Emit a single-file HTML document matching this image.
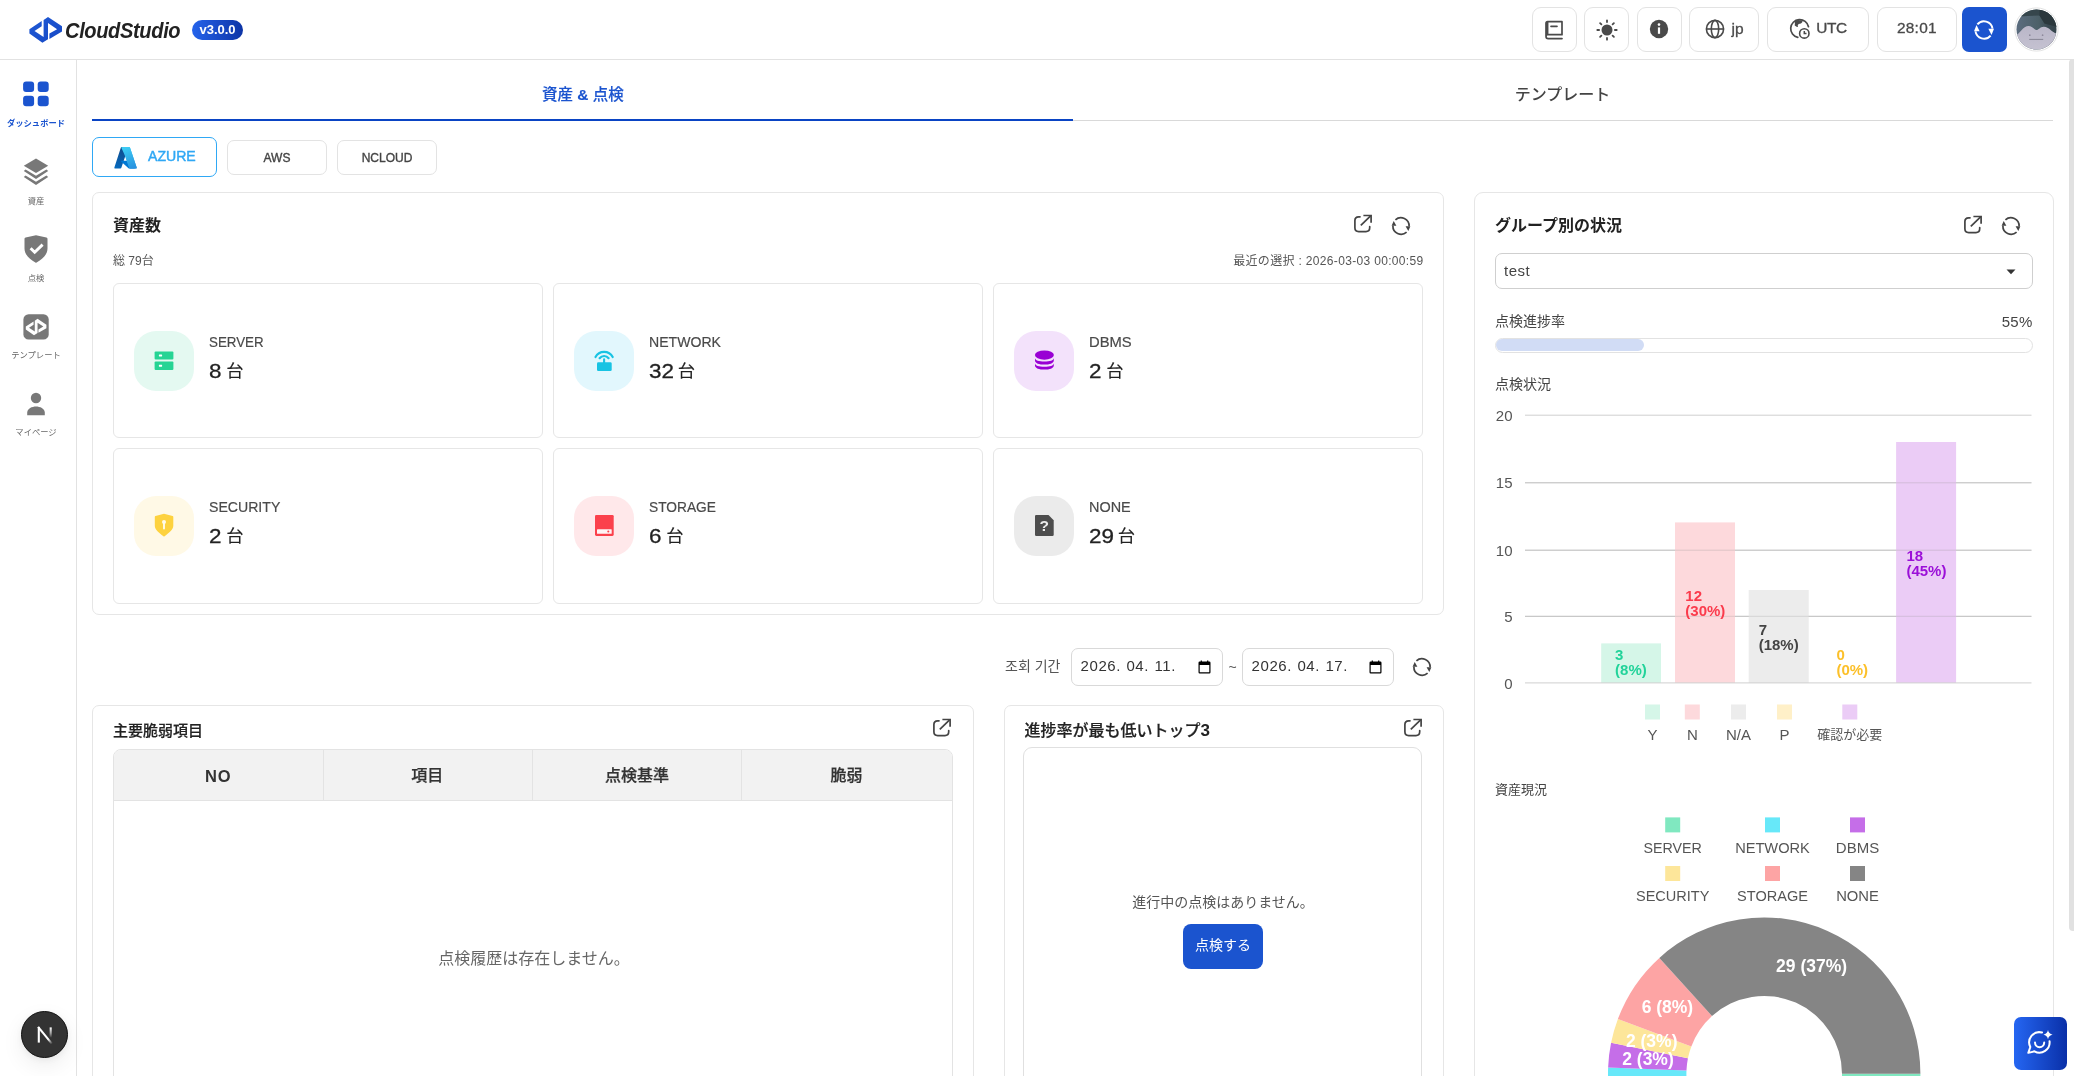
<!DOCTYPE html>
<html lang="ja">
<head>
<meta charset="utf-8">
<title>CloudStudio</title>
<style>
*{box-sizing:border-box;margin:0;padding:0}
html,body{width:2074px;height:1076px;overflow:hidden;background:#fff}
body{position:relative;will-change:transform;font-family:"Liberation Sans","Noto Sans CJK JP",sans-serif;color:#444;-webkit-font-smoothing:antialiased}
.abs{position:absolute}
.t{position:absolute;white-space:nowrap;line-height:1}
.c{transform:translateX(-50%)}
.r{transform:translateX(-100%)}
svg{position:absolute;overflow:visible}
/* header */
#hdr{left:0;top:0;width:2074px;height:60px;border-bottom:1px solid #e2e2e2;background:#fff}
.hb{position:absolute;top:7px;height:45px;border:1px solid #e3e3e3;border-radius:9px;background:#fff}
/* sidebar */
#side{left:0;top:60px;width:77px;height:1016px;border-right:1px solid #e2e2e2;background:#fff}
.sl{position:absolute;white-space:nowrap;line-height:1;font-size:9px;color:#666;left:36px;transform:translateX(-50%)}
/* cards */
.card{position:absolute;border:1px solid #e6e6e6;border-radius:7px;background:#fff}
.ic{position:absolute;width:60px;height:60px;border-radius:22px}
.lab{position:absolute;white-space:nowrap;line-height:1;font-size:15.5px;color:#4a4a4a;-webkit-text-stroke:0.2px #4a4a4a}
.val{position:absolute;white-space:nowrap;line-height:1;font-size:20.4px;color:#222;-webkit-text-stroke:0.3px #222}
.val b{display:inline-block;font-weight:400;transform:scaleX(1.1);transform-origin:0 50%}
.val span{font-size:17.3px;-webkit-text-stroke:0.1px #222;position:relative;top:-1px}
</style>
</head>
<body>
<!-- HEADER -->
<div id="hdr" class="abs">
 <svg style="left:0;top:0" width="70" height="60" viewBox="0 0 70 60"><defs><linearGradient id="lg" x1="0" y1="0" x2="1" y2="1"><stop offset="0" stop-color="#1f5ad6"/><stop offset="1" stop-color="#1648c4"/></linearGradient></defs>
  <polygon fill="url(#lg)" points="29.4,29.2 41.7,21 41.7,26.3 34.5,30.9 43.6,36.9 43.6,20 48,16.9 62,26.3 62,31.6 49.4,38.9 49.4,33.6 57.1,29.2 48,22.9 48,39.3 42.4,42.7 29.4,33.6"/></svg>
 <div class="t" id="brand" style="left:65px;top:21px;font-size:21.5px;font-weight:700;font-style:italic;color:#222;letter-spacing:-0.4px;transform:scaleX(0.934);transform-origin:0 0">CloudStudio</div>
 <div class="abs" style="left:192px;top:20px;width:51px;height:20px;border-radius:10px;background:linear-gradient(90deg,#2563eb,#0d34a6)"></div>
 <div class="t c" style="left:217.5px;top:22.6px;font-size:13px;font-weight:700;color:#fff">v3.0.0</div>

 <div class="hb" style="left:1532px;width:45px"></div>
 <svg style="left:1543px;top:19px" width="22" height="22" viewBox="0 0 22 22" fill="none" stroke="#4a4a4a" stroke-width="1.7" stroke-linejoin="round" stroke-linecap="round"><path d="M19 15.7H4.6V2.7H19V15.7M4.6 2.7 Q3 2.7 3 4.4V17.2Q3 19.6 5.2 19.6H19M3 17.2Q3 15.7 4.6 15.7M8 7.3H14"/></svg>
 <div class="hb" style="left:1584px;width:45px"></div>
 <svg style="left:1594.5px;top:18px" width="24" height="24" viewBox="-12 -12 24 24" stroke="#4a4a4a" stroke-width="1.8" stroke-linecap="round"><circle r="5.5" fill="#4a4a4a" stroke="none"/><path d="M0-7.9V-9.7M0 7.9V9.7M-7.9 0H-9.7M7.9 0H9.7M5.6-5.6 6.9-6.9M-5.6-5.6-6.9-6.9M5.6 5.6 6.9 6.9M-5.6 5.6-6.9 6.9"/></svg>
 <div class="hb" style="left:1637px;width:45px"></div>
 <svg style="left:1649px;top:19px" width="20" height="20" viewBox="-10 -10 20 20"><circle r="9.2" fill="#4a4a4a"/><rect x="-1.1" y="-1.6" width="2.2" height="6.4" fill="#fff"/><circle cy="-4.4" r="1.3" fill="#fff"/></svg>
 <div class="hb" style="left:1689px;width:70px"></div>
 <svg style="left:1705px;top:19px" width="20" height="20" viewBox="-10 -10 20 20" fill="none" stroke="#4a4a4a" stroke-width="1.6"><circle r="8.6"/><ellipse rx="3.7" ry="8.6"/><path d="M-8.6 0H8.6"/></svg>
 <div class="t" style="left:1731.5px;top:21px;font-size:15.5px;color:#4a4a4a;-webkit-text-stroke:0.3px #4a4a4a">jp</div>
 <div class="hb" style="left:1767px;width:102px"></div>
 <svg style="left:1789px;top:18px" width="23" height="23" viewBox="0 0 23 23" fill="none" stroke="#4a4a4a" stroke-width="1.7" stroke-linecap="round"><path d="M8.8 19.4A9 9 0 1 1 19.5 8.7"/><path fill="#4a4a4a" stroke="none" d="M5.6 3.3L9.1 2.1 12.6 2.5 13.7 3.8 12 5.5 9.6 5.9 8.7 7.4 9 9.1 7.6 8.7 5.7 7.4 5.9 5.1Z"/><circle cx="15.3" cy="15.4" r="4.7" stroke-width="1.6"/><path d="M15.3 13V15.5H17.5" stroke-width="1.5" stroke-linecap="butt"/></svg>
 <div class="t" style="left:1816.3px;top:20.4px;font-size:15.4px;color:#4a4a4a;letter-spacing:-0.45px;-webkit-text-stroke:0.35px #4a4a4a">UTC</div>
 <div class="hb" style="left:1877px;width:80px"></div>
 <div class="t c" style="left:1916.9px;top:20.4px;font-size:15.4px;color:#4a4a4a;letter-spacing:0.3px;-webkit-text-stroke:0.3px #4a4a4a">28:01</div>
 <div class="abs" style="left:1962px;top:7px;width:45px;height:45px;border-radius:7px;background:#1b54cf"></div>
 <svg style="left:1973px;top:19px" width="22" height="22" viewBox="-11 -11 22 22" fill="none" stroke="#fff" stroke-width="1.9"><path d="M-6.6-5.6A8.6 8.6 0 0 1 8.5-1.4"/><path d="M6.6 5.6A8.6 8.6 0 0 1-8.5 1.4"/><path fill="#fff" stroke="none" d="M4.4-1.3H10L7.5 5Z"/><path fill="#fff" stroke="none" d="M-4.4 1.3H-10L-7.5-5Z"/></svg>
 <svg style="left:2014.2px;top:7.1px" width="45" height="45" viewBox="-22.5 -22.5 45 45"><defs><clipPath id="av"><circle r="20"/></clipPath><linearGradient id="avg" x1="0" y1="0" x2="1" y2="0"><stop offset="0" stop-color="#5d6e82"/><stop offset="0.55" stop-color="#4c6068"/><stop offset="0.75" stop-color="#3a4a52"/><stop offset="1" stop-color="#34434a"/></linearGradient><linearGradient id="avb" x1="0" y1="0" x2="0" y2="1"><stop offset="0" stop-color="#b9b6c8"/><stop offset="1" stop-color="#c6c3d2"/></linearGradient></defs><circle r="21.6" fill="#fff" stroke="#e3e3e3" stroke-width="1"/><g clip-path="url(#av)"><rect x="-23" y="-23" width="46" height="46" fill="url(#avg)"/><path d="M-23-12.5 -9-13.5 3-14 8-6 23-2V-23H-23Z" fill="#36464c"/><path d="M3-23 3-14 8-6 23-2V-23Z" fill="#2b383d"/><path d="M-21 6C-17 5-14-3.6-7.8-3.6C-4-3.6-2 0.5 0 0.5C2 0.5 3.5-2.8 7.3-2.8C13-2.8 15 3 21 4.5V23H-23Z" fill="url(#avb)"/><circle cx="-6.7" cy="5.7" r="0.85" fill="#8d8a9c"/><circle cx="6.1" cy="5.7" r="0.85" fill="#8d8a9c"/><path d="M-7.3 9.9H6.7" stroke="#6e6b7c" stroke-width="0.7"/></g></svg>
</div>
<!-- SIDEBAR -->
<div id="side" class="abs">
 <svg style="left:0;top:0" width="76" height="400" viewBox="0 60 76 400">
  <g fill="#1b54cf"><rect x="23.1" y="81.5" width="11" height="10.5" rx="3"/><rect x="37.7" y="81.5" width="11" height="10.5" rx="3"/><rect x="23.1" y="95.8" width="11" height="10.5" rx="3"/><rect x="37.7" y="95.8" width="11" height="10.5" rx="3"/></g>
  <g fill="#787878"><polygon points="36,158.4 48.2,165.7 36,173 23.8,165.7"/><polygon points="25.6,169.6 36,175.8 46.4,169.6 48.2,171 36,178.9 23.8,171"/><polygon points="25.6,175.6 36,181.8 46.4,175.6 48.2,177 36,184.9 23.8,177"/></g>
  <path fill="#787878" d="M36 235.2 46.4 237.4Q47.5 237.7 47.5 238.8V248.5C47.5 255 42 259.5 36.6 262.5Q36 262.9 35.4 262.5C30 259.5 24.5 255 24.5 248.5V238.8Q24.5 237.7 25.6 237.4Z"/>
  <path fill="none" stroke="#fff" stroke-width="2.9" stroke-linejoin="miter" d="M30.6 248.2 34.7 252.3 42.6 244.6"/>
  <rect x="23.4" y="314.3" width="25.3" height="25.3" rx="5.2" fill="#787878"/>
  <g transform="translate(36.1 327) scale(0.632) translate(-45.7 -29.8)"><polygon fill="#fff" points="29.4,29.2 41.7,21 41.7,26.3 34.5,30.9 43.6,36.9 43.6,20 48,16.9 62,26.3 62,31.6 49.4,38.9 49.4,33.6 57.1,29.2 48,22.9 48,39.3 42.4,42.7 29.4,33.6"/></g>
  <g fill="#787878"><circle cx="36" cy="398" r="5.2"/><path d="M27.2 415.2V412.6C27.2 408.4 32 406.4 36 406.4C40 406.4 44.8 408.4 44.8 412.6V415.2Z"/></g>
 </svg>
 <div class="sl" style="top:58.5px;color:#1b54cf;font-weight:700;font-size:8.3px">ダッシュボード</div>
 <div class="sl" style="top:137px;font-size:8.3px">資産</div>
 <div class="sl" style="top:213.8px;font-size:8.3px">点検</div>
 <div class="sl" style="top:291.4px;font-size:8.3px">テンプレート</div>
 <div class="sl" style="top:368.4px;font-size:8.3px">マイページ</div>
</div>
<!-- MAIN -->
<div id="main">
 <svg width="0" height="0" style="left:0;top:0"><defs>
  <symbol id="ext" viewBox="0 0 20 20" overflow="visible"><g fill="none" stroke="#444" stroke-width="1.7" stroke-linecap="round" stroke-linejoin="miter"><path d="M7 3.8H5.7Q1.9 3.8 1.9 7.6V14.8Q1.9 18.6 5.7 18.6H12.9Q16.7 18.6 16.7 14.8V13.6"/><path d="M7.8 12.3 17.6 2.8" stroke-linecap="butt"/><path d="M10.4 2.5H18.1V9.8" stroke-linecap="butt"/></g></symbol>
  <symbol id="rf" viewBox="-11 -11 22 22" overflow="visible"><g fill="none" stroke="#444" stroke-width="1.7"><path d="M-5.6-6.2A8.2 8.2 0 0 1 8.1 0.2"/><path d="M5.6 6.2A8.2 8.2 0 0 1-8.1-0.2"/></g><path fill="#444" d="M4.6 0.2H9.4L7.3 5.1Z"/><path fill="#444" d="M-4.6-0.2H-9.4L-7.3-5.1Z"/></symbol>
 </defs></svg>
 <!-- tabs -->
 <div class="t c" style="left:582.9px;top:87px;font-size:15.5px;font-weight:500;color:#1b54cf;-webkit-text-stroke:0.15px #1b54cf">資産 <b>&amp;</b> 点検</div>
 <div class="t c" style="left:1562.5px;top:86.5px;font-size:16px;font-weight:500;color:#444">テンプレート</div>
 <div class="abs" style="left:1073px;top:120px;width:980px;height:1px;background:#d9d9d9"></div>
 <div class="abs" style="left:92px;top:119px;width:981px;height:2px;background:#0a44c4"></div>
 <!-- cloud buttons -->
 <div class="abs" style="left:92px;top:137px;width:125px;height:40px;border:1.5px solid #2fa8f5;border-radius:7px"></div>
 <svg style="left:114px;top:146.5px" width="23" height="22" viewBox="0 0 96 92"><defs><linearGradient id="az1" x1="0.6" y1="0" x2="0.3" y2="1"><stop offset="0" stop-color="#114a8b"/><stop offset="1" stop-color="#0669bc"/></linearGradient><linearGradient id="az2" x1="0.4" y1="0" x2="0.7" y2="1"><stop offset="0" stop-color="#3ccbf4"/><stop offset="1" stop-color="#2892df"/></linearGradient></defs><path fill="url(#az1)" d="M32 0H60L31 86Q30 90 26 90H4Q0 90 1.5 86L28 4Q29.5 0 32 0Z"/><path fill="#0078d4" d="M74 58H29Q27 58 28.5 60L57 86Q59 88 62 90H87Z"/><path fill="url(#az2)" d="M32 0Q29.5 0 28.5 3L37 0H63.5Q66 0 67 3L95 86Q96 90 92 90H66Q64 90 63 87L44 32 31 4Z" transform="translate(0 0)"/><path fill="url(#az2)" d="M67.5 4Q66.5 0 63 0H32Q35 0 36 4L64 86Q65 90 68 90H92Q96 90 94.5 86Z"/></svg>
 <div class="t" style="left:148px;top:149.2px;font-size:14.1px;color:#2fa8f5;font-weight:400;-webkit-text-stroke:0.45px #2fa8f5">AZURE</div>
 <div class="abs" style="left:227px;top:140px;width:100px;height:35px;border:1px solid #e3e3e3;border-radius:7px"></div>
 <div class="t c" style="left:277px;top:151.6px;font-size:12px;color:#444;-webkit-text-stroke:0.35px #444">AWS</div>
 <div class="abs" style="left:337px;top:140px;width:100px;height:35px;border:1px solid #e3e3e3;border-radius:7px"></div>
 <div class="t c" style="left:387px;top:151.6px;font-size:12px;color:#444;-webkit-text-stroke:0.35px #444">NCLOUD</div>
 <!-- asset card -->
 <div class="card" style="left:92px;top:192px;width:1352px;height:423px"></div>
 <div class="t" style="left:113px;top:218px;font-size:16px;font-weight:700;color:#222">資産数</div>
 <svg style="left:1353.3px;top:213.1px" width="20" height="20"><use href="#ext"/></svg>
 <svg style="left:1390px;top:215px" width="22" height="22"><use href="#rf"/></svg>
 <div class="t" style="left:113px;top:254.7px;font-size:12px;color:#555">総 79台</div>
 <div class="t r" style="left:1423.5px;top:254.7px;font-size:12px;color:#555;letter-spacing:0.33px">最近の選択 : 2026-03-03 00:00:59</div>
 <div class="card" style="left:113px;top:283px;width:430px;height:155px;border-radius:6px"></div>
 <div class="ic" style="left:134px;top:331px;background:#e4f9f1"></div>
 <svg style="left:134px;top:330.6px" width="60" height="60" viewBox="0 0 60 60"><rect x="20.6" y="20.4" width="18.8" height="8.2" rx="1" fill="#26d494"/><rect x="20.6" y="30.4" width="18.8" height="8.6" rx="1" fill="#26d494"/><rect x="24.9" y="23.5" width="3.2" height="2" rx="0.4" fill="#fff"/><rect x="24.9" y="33.7" width="3.2" height="2" rx="0.4" fill="#fff"/></svg>
 <div class="lab" style="left:209px;top:334px;transform:scaleX(0.861);transform-origin:0 0">SERVER</div>
 <div class="val" style="left:209px;top:361.1px"><b style="margin-right:0.25px">8</b> <span>台</span></div>
 <div class="card" style="left:553px;top:283px;width:430px;height:155px;border-radius:6px"></div>
 <div class="ic" style="left:574px;top:331px;background:#e2f7fd"></div>
 <svg style="left:574px;top:330.6px" width="60" height="60" viewBox="0 0 60 60"><rect x="23" y="31.2" width="14.7" height="8.8" rx="1.3" fill="#18c3e3"/><path d="M30.1 28.4V32" stroke="#18c3e3" stroke-width="2.1" stroke-linecap="round"/><path d="M25.6 27.2A5.7 5.7 0 0 1 34.6 27.2M21.5 26A9.7 9.7 0 0 1 38.7 26" fill="none" stroke="#18c3e3" stroke-width="2.2" stroke-linecap="round"/></svg>
 <div class="lab" style="left:649px;top:334px;transform:scaleX(0.908);transform-origin:0 0">NETWORK</div>
 <div class="val" style="left:649px;top:361.1px"><b style="margin-right:0.50px">32</b> <span>台</span></div>
 <div class="card" style="left:993px;top:283px;width:430px;height:155px;border-radius:6px"></div>
 <div class="ic" style="left:1014px;top:331px;background:#f3e2fb"></div>
 <svg style="left:1014px;top:330.6px" width="60" height="60" viewBox="0 0 60 60"><g fill="#9900d4"><ellipse cx="30.4" cy="24.1" rx="9.5" ry="4.6"/><path d="M21 27C21 29.4 25 30.6 30.4 30.6S39.8 29.4 39.8 27V29.4C39.8 32.2 35.5 33.6 30.4 33.6S21 32.2 21 29.4Z"/><path d="M21 32.2C21 34.6 25 35.8 30.4 35.8S39.8 34.6 39.8 32.2V34.4C39.8 37.2 35.5 38.6 30.4 38.6S21 37.2 21 34.4Z"/></g></svg>
 <div class="lab" style="left:1089px;top:334px;transform:scaleX(0.953);transform-origin:0 0">DBMS</div>
 <div class="val" style="left:1089px;top:361.1px"><b style="margin-right:0.25px">2</b> <span>台</span></div>
 <div class="card" style="left:113px;top:448px;width:430px;height:156px;border-radius:6px"></div>
 <div class="ic" style="left:134px;top:496px;background:#fff9e6"></div>
 <svg style="left:134px;top:495.0px" width="60" height="60" viewBox="0 0 60 60"><path fill="#fdd23f" d="M30 18.7 38.6 20.9Q39.3 21.1 39.3 21.9V30.5C39.3 34.6 36 36.8 30.6 41.2Q30 41.7 29.4 41.2C24 36.8 20.8 34.6 20.8 30.5V21.9Q20.8 21.1 21.5 20.9Z"/><circle cx="30" cy="27.1" r="2" fill="#fffbea"/><path d="M30 28V33.6" stroke="#fffbea" stroke-width="1.9" stroke-linecap="round"/></svg>
 <div class="lab" style="left:209px;top:499px;transform:scaleX(0.910);transform-origin:0 0">SECURITY</div>
 <div class="val" style="left:209px;top:526.0999999999999px"><b style="margin-right:0.25px">2</b> <span>台</span></div>
 <div class="card" style="left:553px;top:448px;width:430px;height:156px;border-radius:6px"></div>
 <div class="ic" style="left:574px;top:496px;background:#ffe8ea"></div>
 <svg style="left:574px;top:495.0px" width="60" height="60" viewBox="0 0 60 60"><rect x="21" y="19.9" width="18.7" height="21" rx="1.3" fill="#fb414c"/><rect x="23" y="34.2" width="14.7" height="4.6" rx="0.6" fill="#fff3f4"/><circle cx="34.3" cy="36.5" r="1.05" fill="#fb414c"/></svg>
 <div class="lab" style="left:649px;top:499px;transform:scaleX(0.887);transform-origin:0 0">STORAGE</div>
 <div class="val" style="left:649px;top:526.0999999999999px"><b style="margin-right:0.25px">6</b> <span>台</span></div>
 <div class="card" style="left:993px;top:448px;width:430px;height:156px;border-radius:6px"></div>
 <div class="ic" style="left:1014px;top:496px;background:#ebebeb"></div>
 <svg style="left:1014px;top:495.0px" width="60" height="60" viewBox="0 0 60 60"><path fill="#4d4d4d" d="M22.2 19.9H34.5L39.7 25.2V39.7Q39.7 40.9 38.5 40.9H22.2Q21 40.9 21 39.7V21.1Q21 19.9 22.2 19.9Z"/><text x="30.35" y="36" text-anchor="middle" font-family="Liberation Sans,sans-serif" font-weight="700" font-size="15.5" fill="#ececec">?</text></svg>
 <div class="lab" style="left:1089px;top:499px;transform:scaleX(0.931);transform-origin:0 0">NONE</div>
 <div class="val" style="left:1089px;top:526.0999999999999px"><b style="margin-right:0.50px">29</b> <span>台</span></div>
 <!-- date range -->
 <div class="t" style="left:1005px;top:659px;font-size:14px;color:#555;font-family:'Liberation Sans','Noto Sans CJK KR','NanumGothic',sans-serif">조회 기간</div>
 <div class="abs" style="left:1071px;top:648px;width:152px;height:38px;border:1px solid #d9d9d9;border-radius:7px"></div>
 <div class="t" id="d1" style="left:1080.5px;top:657.5px;font-size:15px;color:#333;letter-spacing:0.6px;word-spacing:0.6px">2026. 04. 11.</div>
 <svg style="left:1198px;top:660px" width="13" height="14" viewBox="0 0 13 14"><path fill="#000" d="M2.7 0.4H3.9V1.5H9.1V0.4H10.3V1.5H11.3Q12.5 1.5 12.5 2.7V12.3Q12.5 13.5 11.3 13.5H1.7Q0.5 13.5 0.5 12.3V2.7Q0.5 1.5 1.7 1.5H2.7ZM1.7 4.9V12.3H11.3V4.9Z"/></svg>
 <div class="t" style="left:1228.5px;top:660px;font-size:14px;color:#555">~</div>
 <div class="abs" style="left:1242px;top:648px;width:152px;height:38px;border:1px solid #d9d9d9;border-radius:7px"></div>
 <div class="t" id="d2" style="left:1251.5px;top:657.5px;font-size:15px;color:#333;letter-spacing:0.6px;word-spacing:0.6px">2026. 04. 17.</div>
 <svg style="left:1369px;top:660px" width="13" height="14" viewBox="0 0 13 14"><path fill="#000" d="M2.7 0.4H3.9V1.5H9.1V0.4H10.3V1.5H11.3Q12.5 1.5 12.5 2.7V12.3Q12.5 13.5 11.3 13.5H1.7Q0.5 13.5 0.5 12.3V2.7Q0.5 1.5 1.7 1.5H2.7ZM1.7 4.9V12.3H11.3V4.9Z"/></svg>
 <svg style="left:1411px;top:656px" width="22" height="22"><use href="#rf"/></svg>
 <!-- vuln card -->
 <div class="card" style="left:92px;top:705px;width:882px;height:400px"></div>
 <div class="t" style="left:113px;top:722.7px;font-size:15px;font-weight:500;color:#222;-webkit-text-stroke:0.2px #222">主要脆弱項目</div>
 <svg style="left:931.5px;top:716.7px" width="20" height="20"><use href="#ext"/></svg>
 <div class="abs" style="left:113px;top:749px;width:840px;height:360px;border:1px solid #e3e3e3;border-radius:8px 8px 0 0;overflow:hidden">
  <div class="abs" style="left:0;top:0;width:840px;height:51px;background:#f2f2f2;border-bottom:1px solid #e3e3e3"></div>
  <div class="abs" style="left:208.5px;top:0;width:1px;height:51px;background:#e3e3e3"></div>
  <div class="abs" style="left:417.5px;top:0;width:1px;height:51px;background:#e3e3e3"></div>
  <div class="abs" style="left:626.5px;top:0;width:1px;height:51px;background:#e3e3e3"></div>
 </div>
 <div class="t c" style="left:218.3px;top:768.4px;font-size:16.5px;font-weight:700;color:#333;letter-spacing:0.8px">NO</div>
 <div class="t c" style="left:427.3px;top:768.3px;font-size:16px;font-weight:500;color:#333;-webkit-text-stroke:0.25px #333">項目</div>
 <div class="t c" style="left:637px;top:768.3px;font-size:16px;font-weight:500;color:#333;-webkit-text-stroke:0.25px #333">点検基準</div>
 <div class="t c" style="left:846.5px;top:768.3px;font-size:16px;font-weight:500;color:#333;-webkit-text-stroke:0.25px #333">脆弱</div>
 <div class="t c" style="left:534px;top:950.5px;font-size:16px;color:#666">点検履歴は存在しません。</div>
 <!-- top3 card -->
 <div class="card" style="left:1004px;top:705px;width:440px;height:400px"></div>
 <div class="t" style="left:1024.5px;top:722.2px;font-size:16px;font-weight:500;color:#222;-webkit-text-stroke:0.2px #222">進捗率が最も低いトップ<b style="font-size:17px;font-weight:700;-webkit-text-stroke:0;letter-spacing:0.5px">3</b></div>
 <svg style="left:1402.5px;top:716.7px" width="20" height="20"><use href="#ext"/></svg>
 <div class="abs" style="left:1023px;top:747px;width:399px;height:360px;border:1px solid #e0e0e0;border-radius:9px"></div>
 <div class="t c" style="left:1223px;top:895.3px;font-size:14px;color:#555">進行中の点検はありません。</div>
 <div class="abs" style="left:1183px;top:924px;width:80px;height:45px;border-radius:8px;background:#1b54cf"></div>
 <div class="t c" style="left:1223px;top:938.3px;font-size:14px;color:#fff">点検する</div>

</div>
<!-- RIGHT PANEL -->
<div id="right">
 <div class="card" style="left:1474px;top:192px;width:580px;height:900px;border-radius:9px 9px 0 0"></div>
 <div class="t" style="left:1495px;top:218.2px;font-size:16px;font-weight:700;color:#222">グループ別の状況</div>
 <svg style="left:1962.7px;top:213.5px" width="20" height="20"><use href="#ext"/></svg>
 <svg style="left:1999.5px;top:215px" width="22" height="22"><use href="#rf"/></svg>
 <div class="abs" style="left:1495px;top:253px;width:538px;height:36px;border:1px solid #cfcfcf;border-radius:7px"></div>
 <div class="t" style="left:1504px;top:263px;font-size:15px;color:#444;letter-spacing:0.5px">test</div>
 <svg style="left:2005.5px;top:268.5px" width="10" height="6" viewBox="0 0 10 6"><path d="M0.5 0.5H9.5L5 5.2Z" fill="#333"/></svg>
 <div class="t" style="left:1495px;top:313.7px;font-size:14px;color:#444">点検進捗率</div>
 <div class="t r" style="left:2032.6px;top:313.8px;font-size:15px;color:#444;letter-spacing:0.3px">55%</div>
 <div class="abs" style="left:1495px;top:338px;width:538px;height:15px;border:1px solid #e2e2e2;border-radius:7.5px;background:#fff"></div>
 <div class="abs" style="left:1496px;top:339px;width:148px;height:12px;border-radius:6px;background:#d1dcf5"></div>
 <div class="t" style="left:1495px;top:377.4px;font-size:14px;color:#444">点検状況</div>
 <!-- bar chart -->
 <svg style="left:1474px;top:392px" width="580" height="360" viewBox="1474 392 580 360" font-family="Liberation Sans,Noto Sans CJK JP,sans-serif">
  <g stroke="#cfcfcf" stroke-width="1"><path d="M1525 415.2H2031.5M1525 482.8H2031.5M1525 550.2H2031.5M1525 616.3H2031.5"/></g>
  <g font-size="15" fill="#555" text-anchor="end"><text x="1512.5" y="420.5">20</text><text x="1512.5" y="488.1">15</text><text x="1512.5" y="555.5">10</text><text x="1512.5" y="621.7">5</text><text x="1512.5" y="688.6">0</text></g>
  <rect x="1601.2" y="643.4" width="59.8" height="39.5" fill="#d5f6e8"/>
  <rect x="1675" y="522.4" width="60" height="160.5" fill="#fdd9dc"/>
  <rect x="1748.7" y="590" width="60" height="92.9" fill="#ececec"/>
  <rect x="1896.1" y="442" width="60" height="240.9" fill="#ebccf6"/>
  <g stroke="#8f8f8f" stroke-opacity="0.28" stroke-width="1"><path d="M1525 482.8H2031.5M1525 550.2H2031.5M1525 616.3H2031.5"/></g>
  <path d="M1525 682.9H2031.5" stroke="#cfcfcf" stroke-width="1"/>
  <g font-size="15" font-weight="700">
   <text fill="#22d39a" x="1615.1" y="659.7">3</text><text fill="#22d39a" x="1615.1" y="674.8">(8%)</text>
   <text fill="#fb3b4c" x="1685.3" y="600.8">12</text><text fill="#fb3b4c" x="1685.3" y="615.9">(30%)</text>
   <text fill="#444" x="1758.7" y="634.8">7</text><text fill="#444" x="1758.7" y="649.8">(18%)</text>
   <text fill="#fcc02a" x="1836.4" y="659.7">0</text><text fill="#fcc02a" x="1836.4" y="674.8">(0%)</text>
   <text fill="#9b10d8" x="1906.4" y="560.9">18</text><text fill="#9b10d8" x="1906.4" y="575.9">(45%)</text>
  </g>
  <rect x="1645" y="704.5" width="15" height="15" fill="#d5f6e8"/><rect x="1684.8" y="704.5" width="15" height="15" fill="#fdd9dc"/><rect x="1731" y="704.5" width="15" height="15" fill="#ececec"/><rect x="1777" y="704.5" width="15" height="15" fill="#fff0c8"/><rect x="1842.3" y="704.5" width="15" height="15" fill="#ebccf6"/>
  <g font-size="15" fill="#555" text-anchor="middle"><text x="1652.5" y="739.8">Y</text><text x="1692.3" y="739.8">N</text><text x="1738.5" y="739.8">N/A</text><text x="1784.5" y="739.8">P</text><text x="1849.8" y="739.4" font-size="13">確認が必要</text></g>
 </svg>
 <div class="t" style="left:1495px;top:782.5px;font-size:13px;color:#444">資産現況</div>
 <svg style="left:1474px;top:810px" width="580" height="266" viewBox="1474 810 580 266" font-family="Liberation Sans,Noto Sans CJK JP,sans-serif">
  <rect x="1665.2" y="817.4" width="15" height="15" fill="#80e8c0"/><rect x="1765" y="817.4" width="15" height="15" fill="#67e8f9"/><rect x="1850" y="817.4" width="15" height="15" fill="#c56ee8"/>
  <rect x="1665.2" y="866" width="15" height="15" fill="#fde69a"/><rect x="1765" y="866" width="15" height="15" fill="#fda4a4"/><rect x="1850" y="866" width="15" height="15" fill="#858585"/>
  <g font-size="15" fill="#555" text-anchor="middle"><text x="1672.7" y="853.3" textLength="58.4" lengthAdjust="spacingAndGlyphs">SERVER</text><text x="1772.5" y="853.3" textLength="74.7" lengthAdjust="spacingAndGlyphs">NETWORK</text><text x="1857.5" y="853.3">DBMS</text><text x="1672.7" y="901.2" textLength="73.5" lengthAdjust="spacingAndGlyphs">SECURITY</text><text x="1772.5" y="901.2" textLength="70.9" lengthAdjust="spacingAndGlyphs">STORAGE</text><text x="1857.5" y="901.2" textLength="42.7" lengthAdjust="spacingAndGlyphs">NONE</text></g>
  <path fill="#80e8c0" d="M1920.40 1073.70A156.2 156.2 0 0 1 1889.83 1166.51L1826.78 1119.93A77.8 77.8 0 0 0 1842.00 1073.70Z"/>
<path fill="#67e8f9" d="M1889.83 1166.51A156.2 156.2 0 0 1 1608.12 1067.49L1686.46 1070.61A77.8 77.8 0 0 0 1826.78 1119.93Z"/>
<path fill="#c56ee8" d="M1608.12 1067.49A156.2 156.2 0 0 1 1611.08 1042.85L1687.93 1058.33A77.8 77.8 0 0 0 1686.46 1070.61Z"/>
<path fill="#fde69a" d="M1611.08 1042.85A156.2 156.2 0 0 1 1617.90 1018.98L1691.33 1046.45A77.8 77.8 0 0 0 1687.93 1058.33Z"/>
<path fill="#fda4a4" d="M1617.90 1018.98A156.2 156.2 0 0 1 1659.37 957.90L1711.99 1016.02A77.8 77.8 0 0 0 1691.33 1046.45Z"/>
<path fill="#858585" d="M1659.37 957.90A156.2 156.2 0 0 1 1920.40 1073.70L1842.00 1073.70A77.8 77.8 0 0 0 1711.99 1016.02Z"/>

  <g font-size="17.5" font-weight="700" fill="#fff"><text x="1875.3" y="1115.6" text-anchor="middle">8 (10%)</text>
<text x="1725.4" y="1189.4" text-anchor="middle">32 (41%)</text>
<text x="1648.0" y="1065.1" text-anchor="middle">2 (3%)</text>
<text x="1651.7" y="1046.8" text-anchor="middle">2 (3%)</text>
<text x="1667.4" y="1013.3" text-anchor="middle">6 (8%)</text>
<text x="1811.6" y="972.1" text-anchor="middle">29 (37%)</text>
</g>
 </svg>
</div>

<!-- FLOATING -->
<div id="float">
 <div class="abs" style="left:2068.5px;top:59px;width:7px;height:872px;border-radius:4px 0 0 4px;background:#e1e1e1"></div>
 <div class="abs" style="left:2014px;top:1017px;width:53px;height:53px;border-radius:7px;background:linear-gradient(90deg,#2566f2,#0a30a8)"></div>
 <svg style="left:2026px;top:1029px" width="30" height="30" viewBox="0 0 30 30" fill="none" stroke="#fff" stroke-width="2" stroke-linecap="round" stroke-linejoin="round"><path d="M16.04 3.55A10.2 10.2 0 0 0 4.31 18.03L2.3 23.85L8.45 22.32A10.2 10.2 0 0 0 23.52 12.16"/><path d="M9 13.6A4.6 4.6 0 0 0 18.2 13.6"/><path fill="#fff" stroke="none" d="M22 1.1Q22.7 5 26.6 5.7Q22.7 6.4 22 10.3Q21.3 6.4 17.4 5.7Q21.3 5 22 1.1Z"/></svg>
 <div class="abs" style="left:21px;top:1011px;width:47px;height:47px;border-radius:50%;background:#333;border:1.5px solid #111;box-shadow:0 8px 22px rgba(0,0,0,.07),0 2px 6px rgba(0,0,0,.05)"></div>
 <svg style="left:34px;top:1025px" width="20" height="20" viewBox="0 0 20 20"><defs><linearGradient id="ng1" gradientUnits="userSpaceOnUse" x1="0" y1="2.4" x2="0" y2="12.8"><stop offset="0" stop-color="#fff"/><stop offset="0.55" stop-color="#fff" stop-opacity="0.55"/><stop offset="1" stop-color="#fff" stop-opacity="0"/></linearGradient><linearGradient id="ng2" gradientUnits="userSpaceOnUse" x1="4" y1="2" x2="18" y2="19"><stop offset="0" stop-color="#fff"/><stop offset="0.72" stop-color="#fff"/><stop offset="1" stop-color="#fff" stop-opacity="0"/></linearGradient></defs><path d="M4.8 17.6V1.9" fill="none" stroke="#fff" stroke-width="2.1"/><path d="M4.1 1.9 18.2 19.2" fill="none" stroke="url(#ng2)" stroke-width="2.1"/><path d="M16.7 2.4V12.8" stroke="url(#ng1)" stroke-width="2.1"/></svg>
</div>
</body>
</html>
